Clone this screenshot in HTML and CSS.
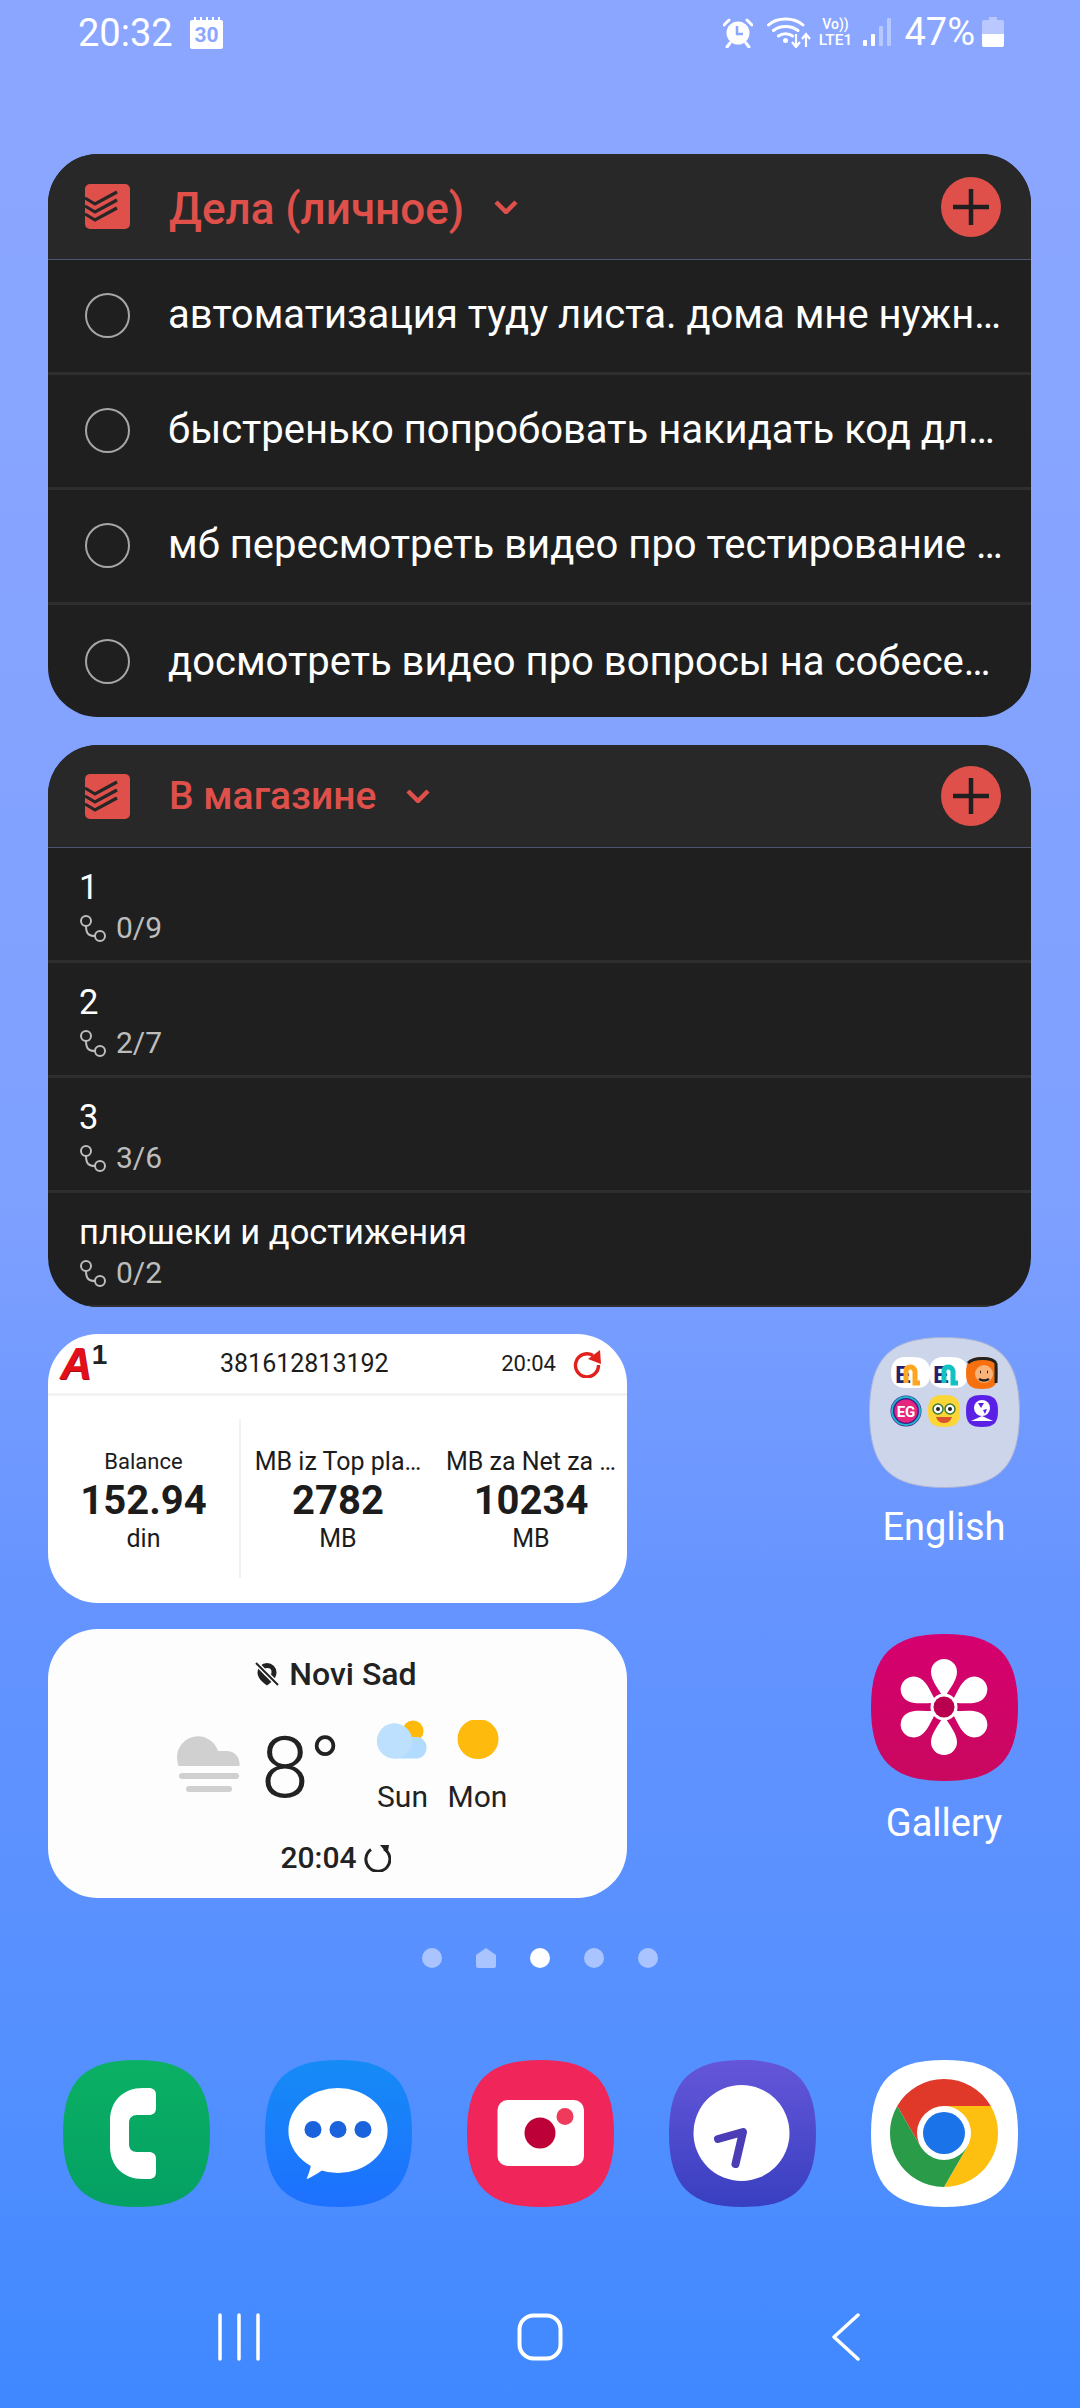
FILE: index.html
```html
<!DOCTYPE html>
<html lang="ru">
<head>
<meta charset="utf-8">
<title>Home screen</title>
<link rel="stylesheet" href="styles.css">
</head>
<body>
<div class="screen">
  <header class="status">
    <div class="status-left">
      <span class="clock">20:32</span>
      <svg class="i-cal" viewBox="0 0 33 32"><path fill="#fff" d="M2 3h2V0h2v3h4V0h2v3h4V0h2v3h4V0h2v3h4V0h2v3h1a2 2 0 0 1 2 2v25a2 2 0 0 1-2 2H2a2 2 0 0 1-2-2V5a2 2 0 0 1 2-2z"/><text x="16.500" y="25" class="cal-t">30</text></svg>
    </div>
    <div class="status-right">
      <svg class="i-alarm" viewBox="0 0 30 30"><circle cx="15" cy="15" r="11.500" fill="#fff"/><path d="M1 7l5-5M29 7l-5-5M7 25l-3 4M23 25l3 4" stroke="#fff" stroke-width="3" stroke-linecap="round"/><path d="M14 8v8h6" stroke="#8aa6ff" stroke-width="2.500" fill="none"/></svg>
      <svg class="i-wifi" viewBox="0 0 44 32"><path d="M1.500 9C10 1 27 1 36 9M6.500 14.500C13 9 24 9 31 14.500M11.500 20c4-3 10-3 14 0" fill="none" stroke="#fff" stroke-width="3" stroke-linecap="round"/><circle cx="18.500" cy="24.500" r="2.500" fill="#fff"/><path d="M29 18v12m-4-4l4 5 4-5M39 31V19m-4 4l4-5 4 5" fill="none" stroke="#fff" stroke-width="2.200"/></svg>
      <div class="volte"><span class="vo">Vo))</span><span class="lte">LTE1</span></div>
      <svg class="i-signal" viewBox="0 0 28 30"><rect x="0" y="23" width="4" height="6" rx="1" fill="#fff"/><rect x="8" y="17" width="4" height="12" rx="1" fill="#fff"/><rect x="16" y="9" width="4" height="20" rx="1" fill="#c6d2ff" opacity=".75"/><rect x="24" y="1" width="4" height="28" rx="1" fill="#c6d2ff" opacity=".75"/></svg>
      <span class="pct">47%</span>
      <svg class="i-batt" viewBox="0 0 22 30"><path d="M7 0h8v3h5a2 2 0 0 1 2 2v23a2 2 0 0 1-2 2H2a2 2 0 0 1-2-2V5a2 2 0 0 1 2-2h5z" fill="#b9c8ff"/><path d="M0 17h22v11a2 2 0 0 1-2 2H2a2 2 0 0 1-2-2z" fill="#fff"/></svg>
    </div>
  </header>

  <main class="home">
    <section class="todo">
      <div class="todo-head">
        <svg class="i-todoist" viewBox="0 0 45 45"><rect width="45" height="45" rx="5" fill="#e0504b"/><path d="M0 14l10 6 22-12M0 22l10 6 22-12M0 30l10 6 22-12" fill="none" stroke="#262626" stroke-width="3.200"/></svg>
        <h2 class="todo-title">Дела (личное)</h2>
        <svg class="i-chev" viewBox="0 0 24 14"><path d="M2 2l10 10L22 2" fill="none" stroke="#e0504b" stroke-width="4.500"/></svg>
        <span class="add"><svg viewBox="0 0 60 60"><path d="M30 12v36M12 30h36" stroke="#1f1f1f" stroke-width="4.500"/></svg></span>
      </div>
      <div class="task"><span class="radio"></span><span class="task-text">автоматизация туду листа. дома мне нужн…</span></div>
      <div class="task"><span class="radio"></span><span class="task-text">быстренько попробовать накидать код дл…</span></div>
      <div class="task"><span class="radio"></span><span class="task-text">мб пересмотреть видео про тестирование …</span></div>
      <div class="task"><span class="radio"></span><span class="task-text">досмотреть видео про вопросы на собесе…</span></div>
    </section>

    <section class="todo shop">
      <div class="todo-head">
        <svg class="i-todoist" viewBox="0 0 45 45"><rect width="45" height="45" rx="5" fill="#e0504b"/><path d="M0 14l10 6 22-12M0 22l10 6 22-12M0 30l10 6 22-12" fill="none" stroke="#262626" stroke-width="3.200"/></svg>
        <h2 class="todo-title small">В магазине</h2>
        <svg class="i-chev" viewBox="0 0 24 14"><path d="M2 2l10 10L22 2" fill="none" stroke="#e0504b" stroke-width="4.500"/></svg>
        <span class="add"><svg viewBox="0 0 60 60"><path d="M30 12v36M12 30h36" stroke="#1f1f1f" stroke-width="4.500"/></svg></span>
      </div>
      <div class="item"><span class="item-name">1</span><span class="item-sub"><svg class="i-sub" viewBox="0 0 27 27"><circle cx="7" cy="6" r="5" fill="none" stroke="#bdbdbd" stroke-width="2"/><circle cx="21" cy="21" r="5" fill="none" stroke="#bdbdbd" stroke-width="2"/><path d="M7 11c0 8 3 10 9 10" fill="none" stroke="#bdbdbd" stroke-width="2"/></svg>0/9</span></div>
      <div class="item"><span class="item-name">2</span><span class="item-sub"><svg class="i-sub" viewBox="0 0 27 27"><circle cx="7" cy="6" r="5" fill="none" stroke="#bdbdbd" stroke-width="2"/><circle cx="21" cy="21" r="5" fill="none" stroke="#bdbdbd" stroke-width="2"/><path d="M7 11c0 8 3 10 9 10" fill="none" stroke="#bdbdbd" stroke-width="2"/></svg>2/7</span></div>
      <div class="item"><span class="item-name">3</span><span class="item-sub"><svg class="i-sub" viewBox="0 0 27 27"><circle cx="7" cy="6" r="5" fill="none" stroke="#bdbdbd" stroke-width="2"/><circle cx="21" cy="21" r="5" fill="none" stroke="#bdbdbd" stroke-width="2"/><path d="M7 11c0 8 3 10 9 10" fill="none" stroke="#bdbdbd" stroke-width="2"/></svg>3/6</span></div>
      <div class="item"><span class="item-name">плюшеки и достижения</span><span class="item-sub"><svg class="i-sub" viewBox="0 0 27 27"><circle cx="7" cy="6" r="5" fill="none" stroke="#bdbdbd" stroke-width="2"/><circle cx="21" cy="21" r="5" fill="none" stroke="#bdbdbd" stroke-width="2"/><path d="M7 11c0 8 3 10 9 10" fill="none" stroke="#bdbdbd" stroke-width="2"/></svg>0/2</span></div>
    </section>

    <div class="mid">
      <div class="mid-widgets">
        <section class="a1">
          <div class="a1-head">
            <span class="a1-logo"><span class="a1-a">A</span><span class="a1-one">1</span></span>
            <span class="a1-num">381612813192</span>
            <span class="a1-time">20:04</span>
            <svg class="i-a1refresh" viewBox="0 0 28 28"><path d="M20 5.500A11.500 11.500 0 1 0 25.500 15" fill="none" stroke="#e3211c" stroke-width="3.400"/><path d="M15 9L27 0l1 14z" fill="#e3211c"/></svg>
          </div>
          <div class="a1-body">
            <div class="a1-col first"><span class="a1-label">Balance</span><b class="a1-val">152.94</b><span class="a1-unit">din</span></div>
            <div class="a1-col"><span class="a1-label wide">MB iz Top pla…</span><b class="a1-val">2782</b><span class="a1-unit">MB</span></div>
            <div class="a1-col"><span class="a1-label wide">MB za Net za …</span><b class="a1-val">10234</b><span class="a1-unit">MB</span></div>
          </div>
        </section>
        <section class="weather">
          <div class="w-city">
            <svg class="i-pin" viewBox="0 0 24 24"><path d="M12 1a9.500 9.500 0 0 1 9.500 9.500c0 5-4 9-9.500 13-5.500-4-9.500-8-9.500-13A9.500 9.500 0 0 1 12 1z" fill="#222"/><circle cx="12.500" cy="10" r="4" fill="#fdfdfd"/><path d="M1 1l22 22" stroke="#fdfdfd" stroke-width="5"/><path d="M1 1l22 22" stroke="#222" stroke-width="2"/></svg>
            <span>Novi Sad</span>
          </div>
          <div class="w-main">
            <svg class="i-fog" viewBox="0 0 63 57"><path d="M1.500 31C.5 28 0 24 0 21a21 21 0 0 1 41-5h9a12.500 12.500 0 0 1 12.500 12.500V31z" fill="#d0d0d0"/><rect x="2" y="38" width="60" height="6" rx="3" fill="#d0d0d0"/><rect x="9" y="51" width="46" height="6" rx="3" fill="#d0d0d0"/></svg>
            <span class="w-temp">8°</span>
            <div class="w-day">
              <svg class="i-day" viewBox="0 0 52 39"><circle cx="36" cy="11" r="10.500" fill="#ffb90b"/><path d="M17.500 38.500a17.500 17.500 0 1 1 17-21.500H41a11 11 0 0 1 0 21.500z" fill="#b2dcff"/><circle cx="17.500" cy="21" r="17.500" fill="#bde0ff"/></svg>
              <span>Sun</span>
            </div>
            <div class="w-day">
              <svg class="i-day" viewBox="0 0 52 39"><ellipse cx="26" cy="19" rx="20.500" ry="20" fill="#ffbb0d"/></svg>
              <span>Mon</span>
            </div>
          </div>
          <div class="w-time">
            <span>20:04</span>
            <svg class="i-wrefresh" viewBox="0 0 28 28"><path d="M8 5.500A12 12 0 1 0 21 5" fill="none" stroke="#222" stroke-width="3"/><path d="M17 1h9l-1.500 9z" fill="#222"/></svg>
          </div>
        </section>
      </div>

      <div class="mid-apps">
        <div class="app">
          <svg class="app-icon folder" viewBox="0 0 151 151">
            <path d="M75.500 .5C130 .5 150.500 21 150.500 75.500S130 150.500 75.500 150.500 .5 130 .5 75.500 21 .5 75.500 .5Z" fill="#cdd5ea" stroke="#aab5d8"/>
            <path d="M37 20c10 0 16 0 20 4 4 4 4 9 4 12 0 8-2 15-14 15H37c-12 0-15-7-15-15s3-16 15-16z" fill="#fff"/>
            <text x="26" y="46" class="mini-t navy">E</text><path d="M37 46V34q0-4 4-4t5 4v12h5" fill="none" stroke="#ffa51f" stroke-width="5"/>
            <path d="M75 20c10 0 16 0 20 4 4 4 4 9 4 12 0 8-2 15-14 15H75c-12 0-15-7-15-15s3-16 15-16z" fill="#fff"/>
            <text x="64" y="46" class="mini-t navy">E</text><path d="M75 46V34q0-4 4-4t5 4v12h5" fill="none" stroke="#12c2c2" stroke-width="5"/>
            <path d="M113 20c12 0 16 4 16 16s-4 16-16 16-16-4-16-16 4-16 16-16z" fill="#f7700f"/>
            <path d="M99 26c6-6 24-6 28 0M127 26v20" fill="none" stroke="#222" stroke-width="3"/>
            <circle cx="115" cy="37" r="9" fill="#f9b277"/><path d="M111 35h1M118 35h1M110 42q5 3 10 0" stroke="#222" stroke-width="2.500" fill="none"/>
            <circle cx="37" cy="74" r="15.500" fill="#4a1b8f"/><circle cx="37" cy="74" r="14" fill="none" stroke="#1cb7c9" stroke-width="2"/><circle cx="37" cy="74" r="11.500" fill="#e6257f"/>
            <text x="37" y="80" class="mini-eg">EG</text>
            <path d="M75 58c12 0 16 4 16 16s-4 16-16 16-16-4-16-16 4-16 16-16z" fill="#fcd637"/>
            <circle cx="69" cy="72" r="5" fill="#fff" stroke="#3b7a3b" stroke-width="1.500"/><circle cx="81" cy="72" r="5" fill="#fff" stroke="#3b7a3b" stroke-width="1.500"/><circle cx="69" cy="72" r="2" fill="#222"/><circle cx="81" cy="72" r="2" fill="#222"/><path d="M67 80h16q-2 6-8 6t-8-6z" fill="#d9532f"/>
            <path d="M113 58c12 0 16 4 16 16s-4 16-16 16-16-4-16-16 4-16 16-16z" fill="#5a20e6"/>
            <circle cx="113" cy="71" r="8" fill="#fff"/><path d="M109 66h6l-3 5zM114 73l4-1-2 5z" fill="#5a20e6"/><path d="M102 84l11-5 11 5z" fill="#fff"/>
          </svg>
          <span class="app-label english">English</span>
        </div>
        <div class="app">
          <svg class="app-icon gallery" viewBox="0 0 147 147">
            <defs><linearGradient id="gGal" x1="0" y1="0" x2="0" y2="1"><stop offset="0" stop-color="#d6006f"/><stop offset="1" stop-color="#c9085f"/></linearGradient></defs>
            <path d="M73.500 0C126 0 147 21 147 73.500S126 147 73.500 147 0 126 0 73.500 21 0 73.500 0Z" fill="url(#gGal)"/>
            <g transform="translate(73 73)" fill="#fff">
              <path d="M0-8C-5-18-13-26-13-35A13 13 0 0 1 13-35C13-26 5-18 0-8Z"/>
              <path transform="rotate(60)" d="M0-8C-5-18-13-26-13-35A13 13 0 0 1 13-35C13-26 5-18 0-8Z"/>
              <path transform="rotate(120)" d="M0-8C-5-18-13-26-13-35A13 13 0 0 1 13-35C13-26 5-18 0-8Z"/>
              <path transform="rotate(180)" d="M0-8C-5-18-13-26-13-35A13 13 0 0 1 13-35C13-26 5-18 0-8Z"/>
              <path transform="rotate(240)" d="M0-8C-5-18-13-26-13-35A13 13 0 0 1 13-35C13-26 5-18 0-8Z"/>
              <path transform="rotate(300)" d="M0-8C-5-18-13-26-13-35A13 13 0 0 1 13-35C13-26 5-18 0-8Z"/>
              <circle r="13.500"/><circle r="10.500" fill="#b8004f"/>
            </g>
          </svg>
          <span class="app-label gallery-label">Gallery</span>
        </div>
      </div>
    </div>

    <div class="dots">
      <span class="dot"></span>
      <svg class="dot-home" viewBox="0 0 20 20"><path d="M10 0l10 7v11a2 2 0 0 1-2 2H2a2 2 0 0 1-2-2V7z" fill="#a9c4ff"/></svg>
      <span class="dot on"></span>
      <span class="dot"></span>
      <span class="dot"></span>
    </div>

    <div class="dock">
      <svg class="app-icon" viewBox="0 0 147 147">
        <defs><linearGradient id="gPh" x1="0" y1="0" x2="0" y2="1"><stop offset="0" stop-color="#0bb063"/><stop offset="1" stop-color="#04a064"/></linearGradient></defs>
        <path d="M73.500 0C126 0 147 21 147 73.500S126 147 73.500 147 0 126 0 73.500 21 0 73.500 0Z" fill="url(#gPh)"/>
        <path d="M86 28c4 0 7 2 7 7v13c0 5-3 7-7 7H74c-5 0-8 3-8 8v21c0 5 3 8 8 8h12c4 0 7 2 7 7v13c0 5-3 7-7 7h-6c-20 0-33-13-33-33V61c0-20 13-33 33-33z" fill="#fff"/>
      </svg>
      <svg class="app-icon" viewBox="0 0 147 147">
        <defs><linearGradient id="gMs" x1="0" y1="0" x2="0" y2="1"><stop offset="0" stop-color="#158bf6"/><stop offset="1" stop-color="#1e70ff"/></linearGradient></defs>
        <path d="M73.500 0C126 0 147 21 147 73.500S126 147 73.500 147 0 126 0 73.500 21 0 73.500 0Z" fill="url(#gMs)"/>
        <ellipse cx="73" cy="70.500" rx="49.600" ry="42.500" fill="#fff"/><path d="M40 100l6 5c-1 5-3 11-4.500 14 4-1 14-7 20-12l-8-6z" fill="#fff"/>
        <circle cx="48" cy="69.500" r="8.500" fill="#1a63dc"/><circle cx="73" cy="69.500" r="8.500" fill="#1a63dc"/><circle cx="98" cy="69.500" r="8.500" fill="#1a63dc"/>
      </svg>
      <svg class="app-icon" viewBox="0 0 147 147">
        <path d="M73.500 0C126 0 147 21 147 73.500S126 147 73.500 147 0 126 0 73.500 21 0 73.500 0Z" fill="#f0255a"/>
        <rect x="30.500" y="40" width="86.500" height="66" rx="10" fill="#fff"/><circle cx="73" cy="73" r="15.500" fill="#bd0037"/><circle cx="98" cy="56.500" r="8.500" fill="#f03a5c"/>
      </svg>
      <svg class="app-icon" viewBox="0 0 147 147">
        <defs><linearGradient id="gNv" x1="0" y1="0" x2="0" y2="1"><stop offset="0" stop-color="#6556d9"/><stop offset="1" stop-color="#383fc0"/></linearGradient></defs>
        <path d="M73.500 0C126 0 147 21 147 73.500S126 147 73.500 147 0 126 0 73.500 21 0 73.500 0Z" fill="url(#gNv)"/>
        <circle cx="72.500" cy="73" r="48" fill="#fff"/><path d="M49 79l25-7-7.500 32" fill="none" stroke="#4a3db5" stroke-width="8" stroke-linecap="round" stroke-linejoin="round"/>
      </svg>
      <svg class="app-icon" viewBox="0 0 147 147">
        <path d="M73.500 0C126 0 147 21 147 73.500S126 147 73.500 147 0 126 0 73.500 21 0 73.500 0Z" fill="#fff"/>
        <path d="M26.200 46A54 54 0 0 1 119.800 46H73L49.600 86.500Z" fill="#e0392a"/>
        <path d="M119.800 46A54 54 0 0 1 73 127L96.400 86.500 73 46Z" fill="#fdbf10"/>
        <path d="M73 127A54 54 0 0 1 26.200 46L49.600 86.500H96.400Z" fill="#2a9b48"/>
        <circle cx="73" cy="73" r="27" fill="#fff"/><circle cx="73" cy="73" r="21" fill="#1a73e8"/>
      </svg>
    </div>

    <nav class="nav">
      <svg class="nav-recent" viewBox="0 0 42 48"><path d="M2 2v44M21 2v44M40 2v44" stroke="#fff" stroke-width="3.500" stroke-linecap="round"/></svg>
      <svg class="nav-home" viewBox="0 0 46 48"><rect x="2.500" y="2.500" width="41" height="43" rx="14" fill="none" stroke="#fff" stroke-width="4"/></svg>
      <svg class="nav-back" viewBox="0 0 28 48"><path d="M26 2L2 24l24 22" fill="none" stroke="#fff" stroke-width="3.500" stroke-linecap="round" stroke-linejoin="round"/></svg>
    </nav>
  </main>
</div>
</body>
</html>
```

FILE: styles.css
```css
* { box-sizing: border-box; }
html, body { margin: 0; padding: 0; }
body { font-family: Roboto, "Noto Sans", sans-serif; }
svg { display: block; flex: none; }

.screen {
  width: 1080px;
  height: 2408px;
  overflow: hidden;
  background: linear-gradient(180deg, #8aa6ff 0%, #8aa6ff 8%, #7ea0ff 50%, #6393ff 68%, #5590ff 85%, #3f88ff 100%);
}

/* status bar */
.status {
  height: 64px;
  padding: 14px 76px 0 78px;
  display: flex;
  justify-content: space-between;
  align-items: flex-start;
  color: #fff;
}
.status-left { display: flex; align-items: center; gap: 17px; }
.clock { font-size: 38px; line-height: 38px; }
.i-cal { width: 33px; height: 32px; }
.cal-t { font: 700 21px Roboto, sans-serif; fill: #8aa6ff; text-anchor: middle; }
.status-right { display: flex; align-items: center; }
.i-alarm { width: 30px; height: 30px; margin-top: 2px; }
.i-wifi { width: 44px; height: 32px; margin-left: 14px; }
.volte { display: flex; flex-direction: column; align-items: center; margin-left: 5px; width: 38px; font-weight: 500; }
.vo { font-size: 14px; line-height: 15px; }
.lte { font-size: 15.500px; line-height: 16px; }
.i-signal { width: 28px; height: 30px; margin-left: 9px; }
.pct { font-size: 38px; line-height: 36px; margin-left: 13px; }
.i-batt { width: 22px; height: 30px; margin-left: 7px; }

.home { padding: 90px 0 0 48px; }

/* todo widgets */
.todo {
  width: 983px;
  height: 563px;
  border-radius: 50px;
  overflow: hidden;
  background: #1f1f1f;
}
.todo.shop { margin-top: 28px; height: 562px; }
.todo-head {
  height: 106px;
  padding: 0 30px 0 37px;
  display: flex;
  align-items: center;
  background: #282828;
  border-bottom: 1px solid #4d5470;
}
.shop .todo-head { height: 103px; }
.i-todoist { width: 45px; height: 45px; }
.todo-title { margin: 4px 0 0 39px; font-size: 44px; line-height: 48px; font-weight: 500; color: #e0504b; }
.todo-title.small { margin-top: 0; font-size: 39px; }
.i-chev { width: 24px; height: 14px; margin: 0 auto 0 30px; }
.add { width: 60px; height: 60px; border-radius: 50%; background: #e0504b; }
.add svg { width: 60px; height: 60px; }

.task {
  height: 115px;
  padding: 0 0 2px 37px;
  display: flex;
  align-items: center;
  border-bottom: 3px solid #2e2e2e;
}
.task:last-child { border-bottom: 0; }
.radio { width: 45px; height: 45px; border-radius: 50%; border: 2.500px solid #a6a6a6; flex: none; }
.task-text { margin-left: 38px; font-size: 40px; line-height: 46px; color: #fff; white-space: nowrap; }

.item {
  height: 115px;
  padding: 20px 0 0 31px;
  display: flex;
  flex-direction: column;
  border-bottom: 3px solid #2e2e2e;
}
.item-name { font-size: 34.500px; line-height: 38px; color: #fff; }
.item-sub { margin-top: 4px; display: flex; align-items: center; gap: 10px; font-size: 30px; line-height: 36px; color: #bdbdbd; }
.i-sub { width: 27px; height: 27px; }

/* middle */
.mid { margin-top: 27px; display: flex; }
.mid-widgets { width: 579px; display: flex; flex-direction: column; gap: 26px; }

.a1 { height: 269px; border-radius: 50px; background: #fff; overflow: hidden; color: #1c1c1c; }
.a1-head { height: 62px; display: flex; align-items: center; border-bottom: 3px solid #f3f3f3; padding: 0 26px 0 12px; }
.a1-logo { width: 40px; height: 44px; display: flex; }
.a1-a { font: italic 700 44px/44px "Liberation Sans", sans-serif; color: #e3101a; text-shadow: 1px 1px 0 #a60c12; }
.a1-one { font: 700 28px/26px "Liberation Sans", sans-serif; color: #222; }
.a1-num { margin-left: 120px; font-size: 25px; line-height: 30px; }
.a1-time { margin-left: auto; font-size: 22px; line-height: 30px; }
.i-a1refresh { width: 28px; height: 28px; margin-left: 17px; }
.a1-body { display: grid; grid-template-columns: 193px 194px 192px; padding-top: 23px; }
.a1-col { height: 159px; display: flex; flex-direction: column; align-items: center; padding-top: 29px; }
.a1-col.first { border-right: 2px solid #f1f1f1; }
.a1-label { font-size: 22px; line-height: 28px; }
.a1-label.wide { font-size: 25px; white-space: nowrap; }
.a1-val { font-size: 40px; line-height: 46px; font-weight: 700; margin-top: 2px; }
.a1-unit { font-size: 25px; line-height: 30px; }

.weather { height: 269px; border-radius: 50px; background: #fdfdfd; color: #222; display: flex; flex-direction: column; align-items: center; padding-top: 27px; }
.w-city { display: flex; align-items: center; gap: 10px; font-size: 32px; line-height: 36px; font-weight: 500; margin-right: 3px; }
.i-pin { width: 24px; height: 24px; }
.w-main { display: flex; align-items: flex-start; margin: 17px 0 0 17px; height: 110px; }
.i-fog { width: 63px; height: 57px; margin-top: 26px; }
.w-temp { font-size: 86px; line-height: 100px; margin: 9px 0 0 21px; font-weight: 300; width: 104px; }
.w-day { display: flex; flex-direction: column; align-items: center; font-size: 30px; line-height: 36px; width: 75px; }
.i-day { width: 52px; height: 39px; margin: 11px 0 20px; }
.w-time { display: flex; align-items: center; gap: 6px; font-size: 30px; line-height: 36px; font-weight: 500; margin: 21px 4px 0 0; }
.i-wrefresh { width: 28px; height: 28px; }

.mid-apps { width: 200px; margin-left: 217px; display: flex; flex-direction: column; align-items: center; }
.app { display: flex; flex-direction: column; align-items: center; }
.app-icon { width: 147px; height: 147px; }
.app-icon.folder { width: 151px; height: 151px; margin-top: 3px; }
.app-label { font-size: 38px; line-height: 44px; color: #fff; }
.english { margin-top: 17px; }
.gallery-label { margin-top: 20px; }
.app + .app { margin-top: 85px; }

.dots { margin: 50px 0 0 -48px; width: 1080px; display: flex; justify-content: center; gap: 34px; }
.dot { width: 20px; height: 20px; border-radius: 50%; background: #a9c4ff; }
.dot.on { background: #fff; }
.dot-home { width: 20px; height: 20px; }

.dock { margin: 92px 0 0 15px; display: flex; gap: 55px; }

.nav { margin: 106px 0 0 170px; display: flex; align-items: flex-start; }
.nav-recent { width: 42px; height: 48px; }
.nav-home { width: 46px; height: 48px; margin-left: 257px; }
.nav-back { width: 28px; height: 48px; margin-left: 269px; }

.mini-t { font: 700 24px "Liberation Sans", sans-serif; }
.navy { fill: #25206e; }
.mini-eg { font: 700 15px Roboto, sans-serif; fill: #fff; text-anchor: middle; }
```
